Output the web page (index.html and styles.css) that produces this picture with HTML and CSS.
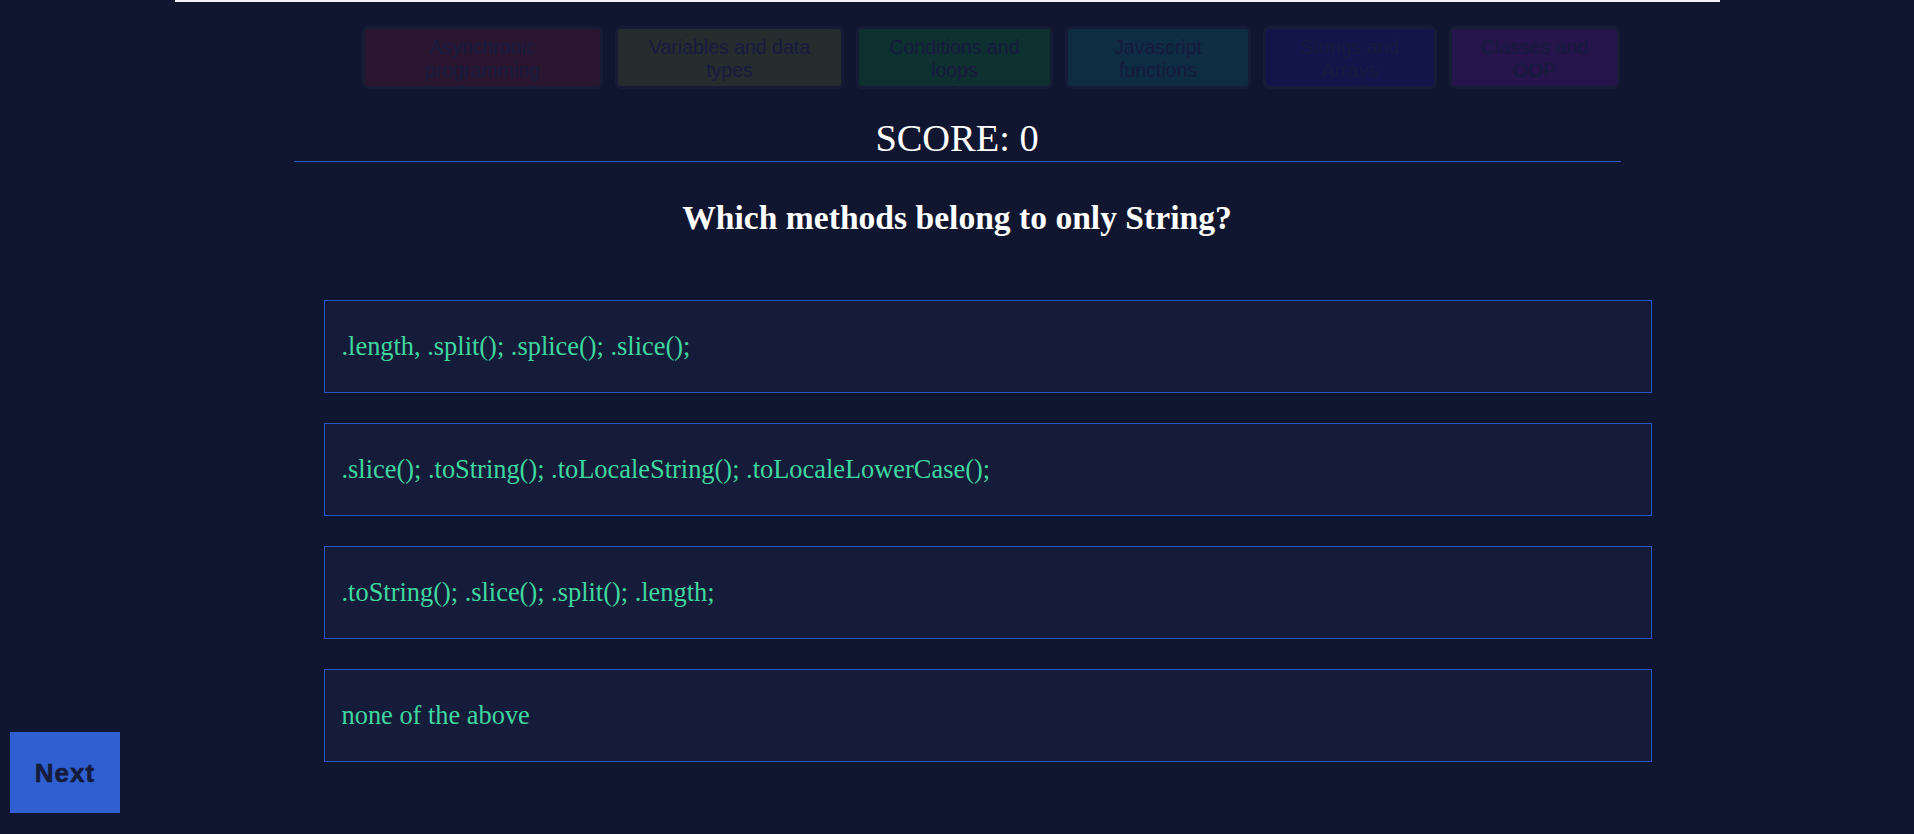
FILE: index.html
```html
<!DOCTYPE html>
<html lang="en">
<head>
<meta charset="utf-8">
<title>Quiz</title>
<link rel="stylesheet" href="styles.css">
</head>
<body>
<div class="topline"></div>
<nav class="tabs">
  <button class="tab tab-async">Asynchronic programming</button>
  <button class="tab tab-vars">Variables and data types</button>
  <button class="tab tab-cond">Conditions and loops</button>
  <button class="tab tab-func">Javascript functions</button>
  <button class="tab tab-str">Strings and Arrays</button>
  <button class="tab tab-oop">Classes and OOP</button>
</nav>
<main class="quiz">
  <div class="score">SCORE: 0</div>
  <h2 class="question">Which methods belong to only String?</h2>
  <ul class="options">
    <li class="option">.length, .split(); .splice(); .slice();</li>
    <li class="option">.slice(); .toString(); .toLocaleString(); .toLocaleLowerCase();</li>
    <li class="option">.toString(); .slice(); .split(); .length;</li>
    <li class="option">none of the above</li>
  </ul>
</main>
<button class="next">Next</button>
</body>
</html>
```
FILE: styles.css
```css
html, body {
  margin: 0;
  padding: 0;
  background: #111630;
  font-family: "Liberation Serif", "Times New Roman", serif;
  overflow: hidden;
  height: 834px;
}

.topline {
  height: 2px;
  width: 1545px;
  margin-left: 175px;
  background: #eef0f3;
}

.tabs {
  display: flex;
  gap: 12px;
  margin-top: 24px;
  padding-left: 362px;
  height: 63px;
}

.tab {
  box-sizing: border-box;
  height: 63px;
  border: 3px solid #161b36;
  border-radius: 6px;
  padding: 3px 6px 0;
  font-family: "Liberation Sans", Arial, sans-serif;
  font-size: 19.5px;
  line-height: 23px;
  color: #161b3e;
  text-align: center;
  cursor: pointer;
}

.tab-async { width: 241px; background: #2a1530; }
.tab-vars  { width: 229px; background: #242c2e; }
.tab-cond  { width: 197px; background: #0f3031; }
.tab-func  { width: 186px; background: #0e2d42; }
.tab-str   { width: 174px; background: #131449; }
.tab-oop   { width: 171px; background: #25154a; }

.quiz {
  width: 1327px;
  margin: 0 auto;
}

.score {
  margin-top: 26px;
  color: #ffffff;
  font-size: 38.4px;
  line-height: 46px;
  text-align: center;
  border-bottom: 1px solid #2f5bc4;
}

.question {
  margin: 36px 0 0;
  color: #ffffff;
  font-size: 33.6px;
  line-height: 39px;
  font-weight: bold;
  text-align: center;
}

.options {
  list-style: none;
  margin: 63px 0 0 30px;
  padding: 0;
  width: 1328px;
  display: flex;
  flex-direction: column;
  gap: 30px;
}

.option {
  box-sizing: border-box;
  height: 93px;
  border: 1px solid #2d55c2;
  background: #151c3a;
  color: #3fd8a0;
  font-size: 26.4px;
  padding: 0 17px;
  display: flex;
  align-items: center;
}

.next {
  position: fixed;
  left: 10px;
  bottom: 21px;
  width: 110px;
  height: 81px;
  border: none;
  background: #2f5fd0;
  color: #151b3b;
  font-family: "Liberation Sans", Arial, sans-serif;
  font-weight: bold;
  font-size: 26px;
  letter-spacing: 1px;
  -webkit-text-stroke: 0.6px #151b3b;
  cursor: pointer;
  padding: 2px 0 0;
}
```
